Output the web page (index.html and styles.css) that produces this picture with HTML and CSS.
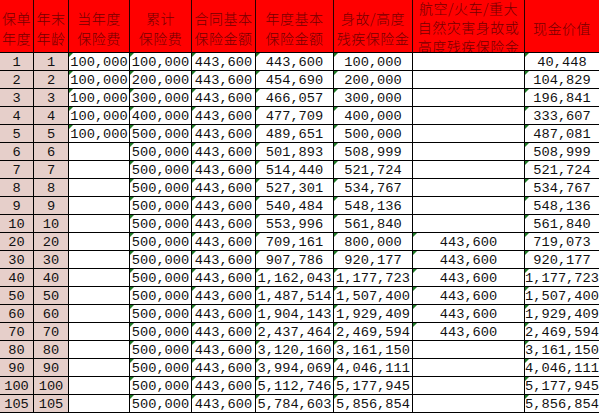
FILE: index.html
```html
<!DOCTYPE html>
<html lang="zh-CN">
<head>
<meta charset="utf-8">
<title>保险利益表</title>
<link rel="stylesheet" href="styles.css">
</head>
<body>
<div class="sheet">
  <div class="h">保单<br>年度</div>
  <div class="h">年末<br>年龄</div>
  <div class="h">当年度<br>保险费</div>
  <div class="h">累计<br>保险费</div>
  <div class="h">合同基本<br>保险金额</div>
  <div class="h">年度基本<br>保险金额</div>
  <div class="h">身故/高度<br>残疾保险金</div>
  <div class="h h3">航空/火车/重大<br>自然灾害身故或<br>高度残疾保险金</div>
  <div class="h last">现金价值</div>

  <div class="c k">1</div><div class="c k">1</div><div class="c t">100,000</div><div class="c t">100,000</div><div class="c t">443,600</div><div class="c t">443,600</div><div class="c t">100,000</div><div class="c"></div><div class="c t last">40,448</div>
  <div class="c k">2</div><div class="c k">2</div><div class="c t">100,000</div><div class="c t">200,000</div><div class="c t">443,600</div><div class="c t">454,690</div><div class="c t">200,000</div><div class="c"></div><div class="c t last">104,829</div>
  <div class="c k">3</div><div class="c k">3</div><div class="c t">100,000</div><div class="c t">300,000</div><div class="c t">443,600</div><div class="c t">466,057</div><div class="c t">300,000</div><div class="c"></div><div class="c t last">196,841</div>
  <div class="c k">4</div><div class="c k">4</div><div class="c t">100,000</div><div class="c t">400,000</div><div class="c t">443,600</div><div class="c t">477,709</div><div class="c t">400,000</div><div class="c"></div><div class="c t last">333,607</div>
  <div class="c k">5</div><div class="c k">5</div><div class="c t">100,000</div><div class="c t">500,000</div><div class="c t">443,600</div><div class="c t">489,651</div><div class="c t">500,000</div><div class="c"></div><div class="c t last">487,081</div>
  <div class="c k">6</div><div class="c k">6</div><div class="c"></div><div class="c t">500,000</div><div class="c t">443,600</div><div class="c t">501,893</div><div class="c t">508,999</div><div class="c"></div><div class="c t last">508,999</div>
  <div class="c k">7</div><div class="c k">7</div><div class="c"></div><div class="c t">500,000</div><div class="c t">443,600</div><div class="c t">514,440</div><div class="c t">521,724</div><div class="c"></div><div class="c t last">521,724</div>
  <div class="c k">8</div><div class="c k">8</div><div class="c"></div><div class="c t">500,000</div><div class="c t">443,600</div><div class="c t">527,301</div><div class="c t">534,767</div><div class="c"></div><div class="c t last">534,767</div>
  <div class="c k">9</div><div class="c k">9</div><div class="c"></div><div class="c t">500,000</div><div class="c t">443,600</div><div class="c t">540,484</div><div class="c t">548,136</div><div class="c"></div><div class="c t last">548,136</div>
  <div class="c k">10</div><div class="c k">10</div><div class="c"></div><div class="c t">500,000</div><div class="c t">443,600</div><div class="c t">553,996</div><div class="c t">561,840</div><div class="c"></div><div class="c t last">561,840</div>
  <div class="c k">20</div><div class="c k">20</div><div class="c"></div><div class="c t">500,000</div><div class="c t">443,600</div><div class="c t">709,161</div><div class="c t">800,000</div><div class="c t">443,600</div><div class="c t last">719,073</div>
  <div class="c k">30</div><div class="c k">30</div><div class="c"></div><div class="c t">500,000</div><div class="c t">443,600</div><div class="c t">907,786</div><div class="c t">920,177</div><div class="c t">443,600</div><div class="c t last">920,177</div>
  <div class="c k">40</div><div class="c k">40</div><div class="c"></div><div class="c t">500,000</div><div class="c t">443,600</div><div class="c t">1,162,043</div><div class="c t">1,177,723</div><div class="c t">443,600</div><div class="c t last">1,177,723</div>
  <div class="c k">50</div><div class="c k">50</div><div class="c"></div><div class="c t">500,000</div><div class="c t">443,600</div><div class="c t">1,487,514</div><div class="c t">1,507,400</div><div class="c t">443,600</div><div class="c t last">1,507,400</div>
  <div class="c k">60</div><div class="c k">60</div><div class="c"></div><div class="c t">500,000</div><div class="c t">443,600</div><div class="c t">1,904,143</div><div class="c t">1,929,409</div><div class="c t">443,600</div><div class="c t last">1,929,409</div>
  <div class="c k">70</div><div class="c k">70</div><div class="c"></div><div class="c t">500,000</div><div class="c t">443,600</div><div class="c t">2,437,464</div><div class="c t">2,469,594</div><div class="c t">443,600</div><div class="c t last">2,469,594</div>
  <div class="c k">80</div><div class="c k">80</div><div class="c"></div><div class="c t">500,000</div><div class="c t">443,600</div><div class="c t">3,120,160</div><div class="c t">3,161,150</div><div class="c"></div><div class="c t last">3,161,150</div>
  <div class="c k">90</div><div class="c k">90</div><div class="c"></div><div class="c t">500,000</div><div class="c t">443,600</div><div class="c t">3,994,069</div><div class="c t">4,046,111</div><div class="c"></div><div class="c t last">4,046,111</div>
  <div class="c k">100</div><div class="c k">100</div><div class="c"></div><div class="c t">500,000</div><div class="c t">443,600</div><div class="c t">5,112,746</div><div class="c t">5,177,945</div><div class="c"></div><div class="c t last">5,177,945</div>
  <div class="c k">105</div><div class="c k">105</div><div class="c"></div><div class="c t">500,000</div><div class="c t">443,600</div><div class="c t">5,784,603</div><div class="c t">5,856,854</div><div class="c"></div><div class="c t last">5,856,854</div>
</div>
</body>
</html>
```
FILE: styles.css
```css
html, body {
  margin: 0;
  padding: 0;
  background: #ffffff;
}

.sheet {
  display: grid;
  grid-template-columns: 34px 35px 61px 62px 64px 78px 79px 112px 74px;
  grid-template-rows: 53px;
  grid-auto-rows: 18px;
  width: 599px;
  overflow: hidden;
}

.h {
  box-sizing: border-box;
  background: #ff0000;
  color: #730000;
  border-right: 1px solid #2a0000;
  border-bottom: 1px solid #000000;
  font-family: "Noto Sans CJK SC", "Noto Sans", sans-serif;
  font-weight: 300;
  font-size: 14px;
  line-height: 20.5px;
  letter-spacing: 0.5px;
  text-align: center;
  display: flex;
  align-items: center;
  justify-content: center;
  padding-top: 4px;
  white-space: nowrap;
  overflow: hidden;
}

.h3 {
  line-height: 19px;
  padding-top: 3px;
}

.c {
  position: relative;
  box-sizing: border-box;
  border-right: 1px solid #000000;
  border-bottom: 1px solid #000000;
  font-family: "Liberation Mono", "DejaVu Sans Mono", monospace;
  font-size: 13.7px;
  line-height: 18px;
  padding-top: 1px;
  color: #111111;
  text-align: center;
  white-space: nowrap;
  overflow: visible;
}

.k {
  background: #e6cfca;
}

.last {
  border-right: none;
}

.t::before {
  content: "";
  position: absolute;
  left: 0;
  top: 0;
  border-top: 4px solid #1f7a26;
  border-right: 4px solid transparent;
}
```
